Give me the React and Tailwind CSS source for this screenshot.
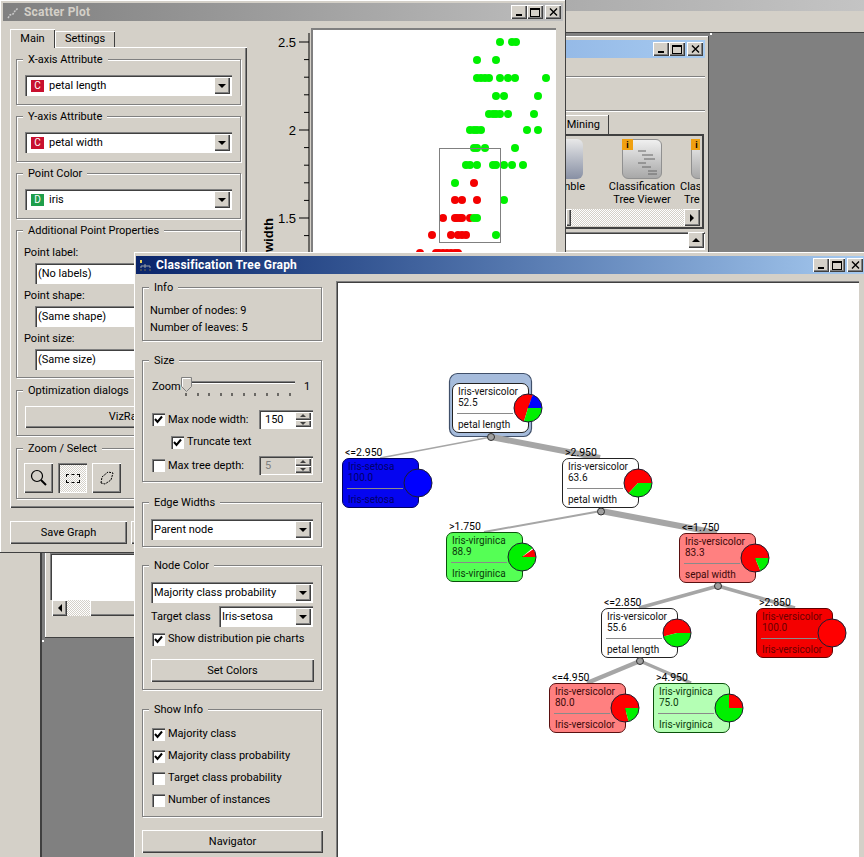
import React from "react";

const FACE = "bg-[#d4d0c8]";
const RAISED = "shadow-[inset_1px_1px_0_#fff,inset_-1px_-1px_0_#404040,inset_-2px_-2px_0_#808080]";
const SUNKEN = "shadow-[inset_1px_1px_0_#808080,inset_2px_2px_0_#404040,inset_-1px_-1px_0_#fff]";
const DITHER = "bg-[repeating-conic-gradient(#d4d0c8_0%_25%,#ffffff_0%_50%)] bg-[length:2px_2px]";

function CaptionButtons() {
  return (
    <div className="flex items-center">
      <div className={`flex h-[14px] w-[16px] items-end justify-center pb-[3px] ${FACE} ${RAISED}`}>
        <div className="h-[2px] w-[6px] bg-black" />
      </div>
      <div className={`mr-[2px] flex h-[14px] w-[16px] items-center justify-center ${FACE} ${RAISED}`}>
        <div className="h-[9px] w-[10px] border border-t-2 border-black" />
      </div>
      <div className={`flex h-[14px] w-[16px] items-center justify-center ${FACE} ${RAISED}`}>
        <svg width="9" height="8" viewBox="0 0 9 8">
          <path d="M1 0.5 L8 7.5 M8 0.5 L1 7.5" stroke="#000" strokeWidth="1.4" />
        </svg>
      </div>
    </div>
  );
}

function Arrow() {
  return (
    <div className={`flex w-[16px] shrink-0 items-center justify-center ${FACE} ${RAISED}`}>
      <svg width="8" height="4" viewBox="0 0 8 4">
        <path d="M0 0 H8 L4 4 Z" fill="#000" />
      </svg>
    </div>
  );
}

function Badge({ letter, color }) {
  return (
    <span className={`ml-[3px] mr-[5px] flex h-[12px] w-[13px] items-center justify-center text-[10px] text-white ${color}`}>
      {letter}
    </span>
  );
}

function Combo({ children, className = "" }) {
  return (
    <div className={`flex bg-white p-[2px] ${SUNKEN} ${className}`}>
      <div className="flex flex-1 items-center overflow-hidden whitespace-nowrap pl-px">{children}</div>
      <Arrow />
    </div>
  );
}

function Group({ title, className = "", children }) {
  return (
    <div className={`relative border border-[#808080] shadow-[1px_1px_0_#fff,inset_1px_1px_0_#fff] ${className}`}>
      <span className="absolute left-[6px] top-[-7px] bg-[#d4d0c8] px-[5px] leading-[14px]">{title}</span>
      {children}
    </div>
  );
}

function Check({ on, label, className = "" }) {
  return (
    <div className={`flex items-center ${className}`}>
      <div className={`mr-[3px] flex h-[13px] w-[13px] items-center justify-center bg-white ${SUNKEN}`}>
        {on && (
          <svg width="9" height="9" viewBox="0 0 9 9">
            <path d="M1 4 L3.5 7 L8 1.5" fill="none" stroke="#000" strokeWidth="2" />
          </svg>
        )}
      </div>
      <span>{label}</span>
    </div>
  );
}

function Spin({ value, disabled }) {
  return (
    <div className={`flex h-[19px] w-[54px] p-[2px] ${disabled ? FACE : "bg-white"} ${SUNKEN}`}>
      <span className={`flex-1 pl-[4px] leading-[16px] ${disabled ? "text-[#808080]" : ""}`}>{value}</span>
      <div className="flex w-[16px] flex-col">
        <div className={`flex flex-1 items-center justify-center ${FACE} ${RAISED}`}>
          <div className="h-0 w-0 border-x-[3px] border-b-[3px] border-x-transparent border-b-[#404040]" />
        </div>
        <div className={`flex flex-1 items-center justify-center ${FACE} ${RAISED}`}>
          <div className="h-0 w-0 border-x-[3px] border-t-[3px] border-x-transparent border-t-[#404040]" />
        </div>
      </div>
    </div>
  );
}

function Button({ children, className = "" }) {
  return <div className={`flex items-center justify-center ${FACE} ${RAISED} ${className}`}>{children}</div>;
}

// scatter data read off the plot: [cx, cy, colour]
const G = "#00f000";
const R = "#f40000";
const row = (y, xs, c) => xs.map((x) => [x, y, c]);
const POINTS = [
  ...row(42, [500, 512, 516], G),
  ...row(60, [477, 496], G),
  ...row(78, [477, 481, 485, 489, 500, 508, 515, 546], G),
  ...row(96, [496, 504, 538], G),
  ...row(114, [489, 493, 496, 500, 508, 534], G),
  ...row(130, [470, 474, 477, 481, 527, 538], G),
  ...row(148, [474, 477, 485, 515], G),
  ...row(165, [466, 470, 477, 493, 496, 504, 512, 523], G),
  ...row(183, [455], G),
  ...row(183, [474], R),
  ...row(200, [455, 462, 477], R),
  ...row(200, [504], G),
  ...row(218, [443, 455, 457, 460, 462, 470], R),
  ...row(218, [474, 477], G),
  ...row(235, [432, 451, 458, 462, 466], R),
  ...row(235, [496], G),
  ...row(253, [420, 436, 439, 443, 447, 451, 455, 458], R),
];

function ScatterChart() {
  const ticks = [];
  for (let i = 0; i < 13; i++) ticks.push(42 + i * 17.6);
  return (
    <svg width="296" height="505" viewBox="262 28 296 505" className="block">
      <rect x="311" y="28" width="245" height="505" fill="#fff" />
      <path d="M312 252 V29 H556" fill="none" stroke="#808080" strokeWidth="2" />
      <path d="M309 33 V533" stroke="#000" strokeWidth="1" />
      {ticks.map((y, i) => (
        <path key={y} d={`M${i % 5 === 0 ? 299 : 304} ${y} H309`} stroke="#000" strokeWidth="1" />
      ))}
      <g fontFamily="Liberation Sans, sans-serif" fontSize="13" fill="#000" textAnchor="end">
        <text x="296" y="47">2.5</text>
        <text x="296" y="135">2</text>
        <text x="296" y="223">1.5</text>
      </g>
      <text
        x="273"
        y="252"
        fontFamily="Liberation Sans, sans-serif"
        fontSize="13"
        fontWeight="bold"
        transform="rotate(-90 273 252)"
      >
        width
      </text>
      {POINTS.map(([x, y, c], i) => (
        <circle key={i} cx={x} cy={y} r="4" fill={c} />
      ))}
      <rect x="439.5" y="148.5" width="61" height="94" fill="none" stroke="#808080" />
    </svg>
  );
}

function ScatterWindow() {
  return (
    <div className={`absolute left-0 top-0 z-20 h-[553px] w-[566px] p-[3px] ${FACE} shadow-[inset_-1px_-1px_0_#404040,inset_1px_1px_0_#fff]`}>
      <div className="flex h-[18px] items-center justify-between bg-gradient-to-r from-[#808080] to-[#bdbdbd] pl-[4px] pr-[2px]">
        <div className="flex items-center gap-[4px]">
          <svg width="13" height="13" viewBox="0 0 13 13">
            <path d="M1 12 L3 9 L6 8 L8 5 L11 2" stroke="#c9c9c9" strokeWidth="1.5" fill="none" strokeDasharray="2 1" />
          </svg>
          <span className="text-[12px] font-bold tracking-[0.2px] text-[#d4d0c8]">Scatter Plot</span>
        </div>
        <CaptionButtons />
      </div>
      <div className="flex">
        <div className="ml-[7px] w-[237px] shrink-0">
          <div className="mt-[8px] flex h-[18px] items-end">
            <div className={`z-10 -mb-px flex h-[19px] w-[45px] items-center justify-center ${FACE} shadow-[inset_1px_1px_0_#fff,inset_-1px_0_0_#404040]`}>Main</div>
            <div className={`flex h-[16px] w-[60px] items-center justify-center ${FACE} shadow-[inset_1px_1px_0_#fff,inset_-1px_0_0_#404040]`}>Settings</div>
          </div>
          <div className={`h-[461px] px-[6px] pt-[12px] shadow-[inset_1px_1px_0_#fff,inset_-1px_-1px_0_#404040,inset_-2px_-2px_0_#808080]`}>
            <Group title="X-axis Attribute" className="h-[46px] px-[8px] pt-[15px]">
              <Combo className="h-[21px] w-[207px]"><Badge letter="C" color="bg-[#c8102e]" />petal length</Combo>
            </Group>
            <Group title="Y-axis Attribute" className="mt-[11px] h-[46px] px-[8px] pt-[15px]">
              <Combo className="h-[21px] w-[207px]"><Badge letter="C" color="bg-[#c8102e]" />petal width</Combo>
            </Group>
            <Group title="Point Color" className="mt-[11px] h-[46px] px-[8px] pt-[15px]">
              <Combo className="h-[21px] w-[207px]"><Badge letter="D" color="bg-[#1e9e4a]" />iris</Combo>
            </Group>
            <Group title="Additional Point Properties" className="mt-[11px] h-[148px] pl-[7px] pt-[15px]">
              <div className="leading-[14px]">Point label:</div>
              <Combo className="ml-[11px] mt-[3px] h-[21px] w-[186px]">(No labels)</Combo>
              <div className="mt-[5px] leading-[14px]">Point shape:</div>
              <Combo className="ml-[11px] mt-[3px] h-[21px] w-[186px]">(Same shape)</Combo>
              <div className="mt-[5px] leading-[14px]">Point size:</div>
              <Combo className="ml-[11px] mt-[3px] h-[21px] w-[186px]">(Same size)</Combo>
            </Group>
            <Group title="Optimization dialogs" className="mt-[12px] h-[46px] px-[8px] pt-[15px]">
              <Button className="h-[22px] w-[207px]">VizRank</Button>
            </Group>
            <Group title="Zoom / Select" className="mt-[12px] h-[51px] px-[7px] pt-[14px]">
              <div className="flex gap-[5px]">
                <Button className="h-[30px] w-[29px]">
                  <svg width="18" height="18" viewBox="0 0 18 18">
                    <circle cx="7" cy="7" r="5.5" fill="none" stroke="#000" strokeWidth="1.2" />
                    <path d="M11 11 L16 16" stroke="#000" strokeWidth="2" />
                  </svg>
                </Button>
                <div className={`flex h-[30px] w-[29px] items-center justify-center ${DITHER} ${SUNKEN}`}>
                  <div className="h-[9px] w-[14px] border border-dashed border-black" />
                </div>
                <Button className="h-[30px] w-[29px]">
                  <svg width="16" height="16" viewBox="0 0 16 16">
                    <path d="M2 13 L3 7 L9 2 L14 3 L12 10 L6 14 Z" fill="none" stroke="#000" strokeDasharray="2 1" />
                  </svg>
                </Button>
              </div>
            </Group>
          </div>
          <div className="mt-[13px] flex gap-[4px]">
            <Button className="h-[23px] w-[117px]">Save Graph</Button>
            <Button className="h-[23px] w-[100px]" />
          </div>
        </div>
        <div className="ml-[15px] mt-[7px]">
          <ScatterChart />
        </div>
      </div>
    </div>
  );
}

function pieWedge(cx, cy, r, from, to) {
  const pt = (a) => {
    const t = ((a - 90) * Math.PI) / 180;
    return `${cx + r * Math.cos(t)} ${cy + r * Math.sin(t)}`;
  };
  const large = to - from > 180 ? 1 : 0;
  return `M${cx} ${cy} L${pt(from)} A${r} ${r} 0 ${large} 1 ${pt(to)} Z`;
}

// x, y = box corner in page pixels; pie slices are [from, to, colour], degrees clockwise from up
const RED = "#ff0000";
const GRN = "#00f000";
const BLU = "#0000ff";
const NODES = [
  { x: 452, y: 383, name: "Iris-versicolor", val: "52.5", split: "petal length", bg: "bg-white", border: "border-[#222]", ink: "text-[#111]", pie: [[197, 380, RED], [90, 197, GRN], [20, 90, BLU]], label: null },
  { x: 342, y: 458, name: "Iris-setosa", val: "100.0", split: "Iris-setosa", bg: "bg-[#0505f0]", border: "border-[#000060]", ink: "text-[#00006a]", pie: null, full: BLU, label: "<=2.950" },
  { x: 562, y: 458, name: "Iris-versicolor", val: "63.6", split: "petal width", bg: "bg-white", border: "border-[#222]", ink: "text-[#111]", pie: [[223, 450, RED], [90, 223, GRN]], label: ">2.950" },
  { x: 446, y: 532, name: "Iris-virginica", val: "88.9", split: "Iris-virginica", bg: "bg-[#55ff55]", border: "border-[#0a500a]", ink: "text-[#0b3b0b]", pie: [[90, 410, GRN], [55, 90, RED]], label: ">1.750" },
  { x: 679, y: 533, name: "Iris-versicolor", val: "83.3", split: "sepal width", bg: "bg-[#ff8080]", border: "border-[#5a1010]", ink: "text-[#3d0a0a]", pie: [[157, 450, RED], [90, 157, GRN]], label: "<=1.750" },
  { x: 601, y: 608, name: "Iris-versicolor", val: "55.6", split: "petal length", bg: "bg-white", border: "border-[#222]", ink: "text-[#111]", pie: [[256, 450, RED], [90, 256, GRN]], label: "<=2.850" },
  { x: 756, y: 608, name: "Iris-versicolor", val: "100.0", split: "Iris-versicolor", bg: "bg-[#f40000]", border: "border-[#600000]", ink: "text-[#6a0000]", pie: null, full: RED, label: ">2.850" },
  { x: 549, y: 683, name: "Iris-versicolor", val: "80.0", split: "Iris-versicolor", bg: "bg-[#ff8080]", border: "border-[#5a1010]", ink: "text-[#3d0a0a]", pie: [[165, 450, RED], [90, 165, GRN]], label: "<=4.950" },
  { x: 653, y: 683, name: "Iris-virginica", val: "75.0", split: "Iris-virginica", bg: "bg-[#b4ffb4]", border: "border-[#0a500a]", ink: "text-[#0b3b0b]", pie: [[90, 360, GRN], [0, 90, RED]], label: ">4.950" },
];

const OX = 336;
const OY = 281;

const EDGES = [
  [491, 437, 380, 458, 1.5],
  [491, 437, 600, 458, 6],
  [601, 511, 484, 532, 2],
  [601, 511, 717, 533, 6],
  [718, 586, 639, 608, 3.5],
  [718, 586, 795, 608, 3.5],
  [640, 661, 587, 683, 4.5],
  [640, 661, 691, 683, 3.5],
];
const DOTS = [[491, 437], [601, 511.5], [718, 586], [640, 661]];

function TreeCanvas() {
  return (
    <div className={`relative ml-[14px] mt-[7px] h-[576px] w-[523px] overflow-hidden bg-white ${SUNKEN}`}>
      <svg width="523" height="576" viewBox={`${OX} ${OY} 523 576`} className="absolute inset-0">
        <rect x="449.5" y="373.5" width="82" height="63" rx="8" fill="#a6bcdc" stroke="#40506a" strokeWidth="1.2" />
        {EDGES.map(([a, b, c, d, w], i) => (
          <path key={i} d={`M${a} ${b} L${c} ${d}`} stroke="#a6a6a6" strokeWidth={w} />
        ))}
      </svg>
      {NODES.map((n) => (
        <div key={`${n.x}-${n.y}`} className="absolute" style={{ left: n.x - OX, top: n.y - OY }}>
          {n.label && <div className="absolute left-[3px] top-[-11px] text-[10.5px] leading-[11px] text-black">{n.label}</div>}
          <div className={`h-[50px] w-[77px] rounded-[7px] border pl-[4px] pt-[2px] text-[10px] leading-[11px] ${n.bg} ${n.border} ${n.ink}`}>
            <div className="pl-px">{n.name}</div>
            <div className="pl-px">{n.val}</div>
            <div className="mt-[5px] h-px w-[56px] bg-[#8a8a8a]" />
            <div className="mt-[5px] pl-px">{n.split}</div>
          </div>
        </div>
      ))}
      <svg width="523" height="576" viewBox={`${OX} ${OY} 523 576`} className="absolute inset-0">
        {NODES.map((n) => {
          const cx = n.x + 76;
          const cy = n.y + 25;
          return (
            <g key={`${n.x}-${n.y}`}>
              {n.full && <circle cx={cx} cy={cy} r="14" fill={n.full} />}
              {n.pie && n.pie.map(([from, to, c]) => <path key={from} d={pieWedge(cx, cy, 14, from, to)} fill={c} />)}
              <circle cx={cx} cy={cy} r="14" fill="none" stroke="#1c1c30" strokeWidth="1" />
            </g>
          );
        })}
        {DOTS.map(([x, y]) => (
          <circle key={x} cx={x} cy={y} r="3.5" fill="#a0a0a0" stroke="#303030" />
        ))}
      </svg>
    </div>
  );
}

function TreeWindow() {
  return (
    <div className={`absolute left-[134px] top-[252px] z-30 h-[605px] w-[730px] pl-[2px] pt-[4px] ${FACE} shadow-[inset_1px_1px_0_#fff]`}>
      <div className="flex h-[18px] items-center justify-between bg-gradient-to-r from-[#0a246a] to-[#a6caf0] pl-[3px] pr-px">
        <div className="flex items-center gap-[4px]">
          <svg width="13" height="13" viewBox="0 0 13 13">
            <path d="M1 1 H3 V4 H1 Z" fill="#e8d060" />
            <path d="M6 5 V7 M2 7 H11 V9 M2 7 V9 M6 7 V9" stroke="#9aa0a8" fill="none" />
            <path d="M1 10 H3 V12 H1 Z M5 10 H7 V12 H5 Z M10 10 H12 V12 H10 Z" fill="#40485a" />
          </svg>
          <span className="text-[12px] font-bold tracking-[0.2px] text-white">Classification Tree Graph</span>
        </div>
        <CaptionButtons />
      </div>
      <div className="flex">
        <div className="ml-[6px] w-[180px] shrink-0 pt-[13px]">
          <Group title="Info" className="h-[54px] pl-[7px] pt-[14px]">
            <div className="leading-[17px]">Number of nodes: 9</div>
            <div className="leading-[17px]">Number of leaves: 5</div>
          </Group>
          <Group title="Size" className="mt-[19px] h-[122px] pl-[9px] pt-[14px]">
            <div className="flex h-[24px] items-start">
              <span className="mt-[4px] w-[31px]">Zoom</span>
              <div className="relative h-[24px] w-[112px]">
                <div className={`absolute left-0 right-0 top-[6px] h-[3px] ${SUNKEN}`} />
                <svg width="11" height="15" viewBox="0 0 11 15" className="absolute left-[-2px] top-[2px]">
                  <path d="M0.5 0.5 H10.5 V9.5 L5.5 14.5 L0.5 9.5 Z" fill="#d4d0c8" stroke="#808080" />
                  <path d="M1.5 9.5 V1.5 H9.5" fill="none" stroke="#fff" />
                </svg>
                <svg width="112" height="4" viewBox="0 0 112 4" className="absolute left-0 top-[18px]">
                  <path d="M3 0 V3 M15 0 V3 M26 0 V3 M38 0 V3 M49 0 V3 M61 0 V3 M72 0 V3 M84 0 V3 M95 0 V3 M107 0 V3" stroke="#000" />
                </svg>
              </div>
              <span className="ml-[9px] mt-[4px]">1</span>
            </div>
            <div className="mt-[11px] flex h-[19px] items-center">
              <Check on label="Max node width:" />
              <div className="ml-auto mr-[8px]"><Spin value="150" /></div>
            </div>
            <Check on label="Truncate text" className="ml-[19px] mt-[5px]" />
            <div className="mt-[6px] flex h-[19px] items-center">
              <Check label="Max tree depth:" />
              <div className="ml-auto mr-[8px]"><Spin value="5" disabled /></div>
            </div>
          </Group>
          <Group title="Edge Widths" className="mt-[20px] h-[45px] pl-[8px] pt-[16px]">
            <Combo className="h-[21px] w-[162px]">Parent node</Combo>
          </Group>
          <Group title="Node Color" className="mt-[18px] h-[125px] pl-[8px] pt-[16px]">
            <Combo className="h-[21px] w-[162px]">Majority class probability</Combo>
            <div className="mt-[3px] flex items-center">
              <span className="w-[68px]">Target class</span>
              <Combo className="h-[21px] w-[94px]">Iris-setosa</Combo>
            </div>
            <Check on label="Show distribution pie charts" className="ml-px mt-[4px]" />
            <Button className="mt-[12px] h-[23px] w-[163px]">Set Colors</Button>
          </Group>
          <Group title="Show Info" className="mt-[19px] h-[108px] pl-[9px] pt-[16px]">
            <Check on label="Majority class" />
            <Check on label="Majority class probability" className="mt-[6px]" />
            <Check label="Target class probability" className="mt-[6px]" />
            <Check label="Number of instances" className="mt-[6px]" />
          </Group>
          <Button className="mt-[13px] h-[23px] w-[181px]">Navigator</Button>
        </div>
        <TreeCanvas />
      </div>
    </div>
  );
}

function SchemaWindow() {
  return (
    <div className={`absolute left-[45px] top-[36px] z-10 flex h-[602px] w-[664px] flex-col justify-between ${FACE} shadow-[inset_-1px_-1px_0_#404040,inset_1px_1px_0_#fff]`}>
      <div className="pr-[4px] pt-[4px]">
        <div className="flex h-[18px] items-center justify-end bg-gradient-to-r from-[#4a6cb0] via-[#7fa4da] to-[#a6caf0] pr-[2px]">
          <CaptionButtons />
        </div>
        <div className="mt-[18px] h-px bg-[#808080] shadow-[0_1px_0_#fff]" />
        <div className="mt-[33px] h-px bg-[#808080] shadow-[0_1px_0_#fff]" />
        <div className="flex h-[23px] items-end justify-end pr-[96px]">
          <div className="flex h-[19px] w-[60px] items-center justify-end pr-[9px] shadow-[inset_-1px_0_0_#404040,inset_0_1px_0_#fff]">Mining</div>
        </div>
        <div className="mr-[1px] h-[95px] shadow-[inset_0_2px_0_#404040,inset_-2px_-2px_0_#404040]">
          <div className="flex h-[75px] items-start justify-end overflow-hidden pr-[4px] pt-[5px]">
            <div className="flex w-[40px] flex-col items-end">
              <div className="mr-[2px] h-[40px] w-[40px] rounded-r-[6px] bg-gradient-to-b from-[#e8e8e8] to-[#8890a4]" />
              <span className="mt-[1px] leading-[13px]">nble</span>
            </div>
            <div className="ml-[19px] flex w-[76px] flex-col items-center">
              <div className="relative h-[40px] w-[40px] rounded-[6px] border border-[#909090] bg-gradient-to-b from-[#f0f0f0] to-[#a8a8a8]">
                <div className="absolute left-[-1px] top-[-1px] flex h-[11px] w-[11px] items-center justify-center bg-[#f0a010] text-[9px] font-bold">i</div>
                <svg width="30" height="30" viewBox="0 0 30 30" className="absolute left-[8px] top-[8px]">
                  <path d="M7 3 H15 M11 7 H22 M13 11 H24 M7 15 H15 M11 19 H20 M17 23 H26 M17 26 H26" stroke="#666" />
                </svg>
              </div>
              <span className="mt-[1px] whitespace-nowrap leading-[13px]">Classification</span>
              <span className="whitespace-nowrap leading-[13px]">Tree Viewer</span>
            </div>
            <div className="flex w-[20px] flex-col items-start overflow-hidden">
              <div className="relative ml-[11px] h-[40px] w-[20px] shrink-0 rounded-[6px] border border-[#909090] bg-gradient-to-b from-[#f0f0f0] to-[#a8a8a8]">
                <div className="absolute left-[-1px] top-[-1px] flex h-[11px] w-[11px] items-center justify-center bg-[#f0a010] text-[9px] font-bold">i</div>
              </div>
              <span className="mt-[1px] whitespace-nowrap leading-[13px]">Classification</span>
              <span className="ml-[4px] whitespace-nowrap leading-[13px]">Tree Viewer</span>
            </div>
          </div>
          <div className={`ml-[2px] mr-[4px] flex h-[17px] justify-between ${DITHER}`}>
            <Button className="ml-[519px] h-[17px] w-[5px]" />
            <Button className="h-[17px] w-[16px]">
              <div className="h-0 w-0 border-y-[4px] border-l-[4px] border-y-transparent border-l-black" />
            </Button>
          </div>
        </div>
        <div className={`mt-[3px] flex h-[18px] justify-end bg-white pr-px ${SUNKEN}`}>
          <Button className="h-[16px] w-[16px]">
            <div className="h-0 w-0 border-x-[4px] border-b-[4px] border-x-transparent border-b-black" />
          </Button>
        </div>
      </div>
      <div className="pb-[22px] pl-[5px]">
        <div className={`h-[47px] bg-white ${SUNKEN}`} />
        <div className="flex h-[16px]">
          <Button className="ml-[2px] h-[16px] w-[15px]">
            <div className="h-0 w-0 border-y-[4px] border-r-[4px] border-y-transparent border-r-black" />
          </Button>
          <div className={`h-[16px] w-[23px] ${DITHER}`} />
          <Button className="h-[16px] flex-1" />
        </div>
      </div>
    </div>
  );
}

export default function App() {
  return (
    <div className={`relative h-[857px] w-[864px] overflow-hidden font-['Roboto',sans-serif] text-[11px] leading-[16px] text-black ${FACE}`}>
      <div className="h-[11px] bg-gradient-to-r from-[#808080] to-[#c4c4c4]" />
      <div className="absolute bottom-0 left-[40px] right-0 top-[32px] border-l-2 border-t border-[#404040] bg-[#808080]" />
      <div className="absolute left-[710px] top-[33px] h-[2px] w-[2px] bg-white" />
      <SchemaWindow />
      <div className="absolute left-[42px] top-[640px] z-10 h-[2px] w-[2px] bg-white" />
      <ScatterWindow />
      <TreeWindow />
    </div>
  );
}
